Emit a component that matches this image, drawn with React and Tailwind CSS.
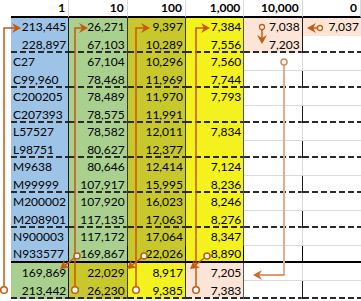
import React from "react";

const ORANGE = "#C55A11";
const FADED = "#E8AB8A";

const headers = ["1", "10", "100", "1,000", "10,000", "0"];

const body = [
  ["213,445", "26,271", "9,397", "7,384", "7,038", "7,037"],
  ["228,897", "67,103", "10,289", "7,556", "7,203", ""],
  ["C27", "67,104", "10,296", "7,560", "", ""],
  ["C99,960", "78,468", "11,969", "7,744", "", ""],
  ["C200205", "78,489", "11,970", "7,793", "", ""],
  ["C207393", "78,575", "11,991", "", "", ""],
  ["L57527", "78,582", "12,011", "7,834", "", ""],
  ["L98751", "80,627", "12,377", "", "", ""],
  ["M9638", "80,646", "12,414", "7,124", "", ""],
  ["M99999", "107,917", "15,995", "8,236", "", ""],
  ["M200002", "107,920", "16,023", "8,246", "", ""],
  ["M208901", "117,135", "17,063", "8,276", "", ""],
  ["N900003", "117,172", "17,064", "8,347", "", ""],
  ["N933577", "169,867", "22,026", "8,890", "", ""],
];

const summary = [
  ["169,869", "22,029", "8,917", "7,205", "", ""],
  ["213,442", "26,230", "9,385", "7,383", "", ""],
];

const BLUE = "bg-[#9DC3E6]";
const GREEN = "bg-[#A9D08E]";
const OLIVE = "bg-[#C8C82C]";
const YELLOW = "bg-[#F3F21E]";
const PINK = "bg-[#FCE4D6]";
const WHITE = "bg-white";

// right edge of each of the six columns
const rightLines = [
  "border-r border-[#1a1a1a]",
  "border-r border-[#3a3a2a]",
  "border-r border-[#333]",
  "border-r border-[#555]",
  "border-r border-[#1a1a1a]",
  "",
];

const DASH =
  "bg-[image:repeating-linear-gradient(90deg,#2a2a2a_0_6px,transparent_6px_9px)] bg-[length:100%_2px] bg-bottom bg-no-repeat";

const Cell = ({ text, bg, col, bottom, left, height }) => {
  let line = "";
  if (bottom === "dash") line = DASH;
  if (bottom === "thick") line = "border-b-2 border-black";
  if (bottom === "thin" && bg === WHITE) line = "border-b border-[#D9D9D9]";
  return (
    <div
      className={`${bg} ${rightLines[col]} ${line} ${height} flex items-center ${
        left ? "justify-start pl-[2px]" : "justify-end pr-[2px]"
      } text-[12px] leading-none text-black pt-[1px]`}
    >
      {text}
    </div>
  );
};

const Head = ({ x, y, a, c = ORANGE }) => {
  const r = (a * Math.PI) / 180;
  const cos = Math.cos(r);
  const sin = Math.sin(r);
  const pt = (dx, dy) => `${x + dx * cos - dy * sin},${y + dx * sin + dy * cos}`;
  return (
    <polygon
      points={[pt(0, 0), pt(-9, -5), pt(-6, 0), pt(-9, 5)].join(" ")}
      fill={c}
    />
  );
};

const Arrows = () => {
  const ups = [
    { x: 4, tip: 21 },
    { x: 75, tip: 88 },
    { x: 136, tip: 150 },
    { x: 196, tip: 210 },
  ];
  const diags = [
    { from: [77, 256], to: [60, 269] },
    { from: [144, 256], to: [127, 269] },
    { from: [207, 256], to: [190, 269] },
  ];
  return (
    <svg className="absolute inset-0 pointer-events-none" width="361" height="301">
      {ups.map((u) => (
        <g key={u.x}>
          <path d={`M${u.x} 290 V28 H${u.tip - 6}`} fill="none" stroke={ORANGE} strokeWidth="1.5" />
          <Head x={u.tip} y={28} a={0} />
          <circle cx={u.x} cy={290} r="3.3" fill="#fff" stroke={ORANGE} strokeWidth="1.5" />
        </g>
      ))}
      {diags.map((d) => {
        const [fx, fy] = d.from;
        const [tx, ty] = d.to;
        const a = (Math.atan2(ty - fy, tx - fx) * 180) / Math.PI;
        const len = Math.hypot(tx - fx, ty - fy);
        const ex = tx - ((tx - fx) / len) * 6;
        const ey = ty - ((ty - fy) / len) * 6;
        return (
          <g key={fx}>
            <line x1={fx} y1={fy} x2={ex} y2={ey} stroke={ORANGE} strokeWidth="1.5" />
            <Head x={tx} y={ty} a={a} />
            <circle cx={fx} cy={fy} r="3" fill="#fff" stroke={ORANGE} strokeWidth="1.5" />
          </g>
        );
      })}
      <line x1="262" y1="27" x2="262" y2="38" stroke={ORANGE} strokeWidth="1.5" />
      <Head x={262} y={44} a={90} />
      <circle cx="262" cy="27" r="2.5" fill="#fff" stroke={ORANGE} strokeWidth="1.3" />

      <line x1="320" y1="28" x2="312" y2="28" stroke={ORANGE} strokeWidth="1.5" />
      <Head x={307} y={28} a={180} />
      <circle cx="320" cy="28" r="2.5" fill="#fff" stroke={ORANGE} strokeWidth="1.3" />

      <line x1="284" y1="65" x2="284" y2="275" stroke={FADED} strokeWidth="2" />
      <line x1="284.5" y1="275" x2="259" y2="275" stroke="#D27A45" strokeWidth="1.5" />
      <Head x={253} y={275} a={180} c="#D06A2C" />
      <circle cx="284" cy="62" r="3" fill="#fff" stroke="#D9875A" strokeWidth="1.5" />
    </svg>
  );
};

const bodyBg = (r, c) => {
  if (c === 0) return BLUE;
  if (c === 1) return GREEN;
  if (c === 2) return OLIVE;
  if (c === 3) return YELLOW;
  if (c === 4) return r < 2 ? PINK : WHITE;
  return r === 0 ? PINK : WHITE;
};

const summaryBg = [GREEN, OLIVE, YELLOW, PINK, WHITE, WHITE];

export default function App() {
  return (
    <div className="relative w-[361px] h-[301px] bg-white overflow-hidden font-['Lato',sans-serif]">
      <div className="grid grid-cols-[11px_repeat(6,minmax(0,1fr))]">
        <div className="h-[18px] bg-white" />
        {headers.map((h) => (
          <div
            key={h}
            className="h-[18px] border-b-2 border-black border-r border-r-[#D9D9D9] flex items-center justify-end pr-[3px] text-[12px] font-bold leading-none text-black"
          >
            {h}
          </div>
        ))}

        {body.map((row, r) => (
          <React.Fragment key={r}>
            <div className="h-[17.5px] bg-white" />
            {row.map((t, c) => (
              <Cell
                key={c}
                text={t}
                col={c}
                bg={bodyBg(r, c)}
                left={c === 0 && r >= 2}
                height="h-[17.5px]"
                bottom={r === 13 ? "thick" : r % 2 === 1 ? "dash" : "thin"}
              />
            ))}
          </React.Fragment>
        ))}

        {summary.map((row, r) => (
          <React.Fragment key={`s${r}`}>
            <div className="h-[18px] bg-white" />
            {row.map((t, c) => (
              <Cell
                key={c}
                text={t}
                col={c}
                bg={summaryBg[c]}
                height="h-[18px]"
                bottom={r === 1 ? "dash" : "thin"}
              />
            ))}
          </React.Fragment>
        ))}
      </div>
      <Arrows />
    </div>
  );
}
